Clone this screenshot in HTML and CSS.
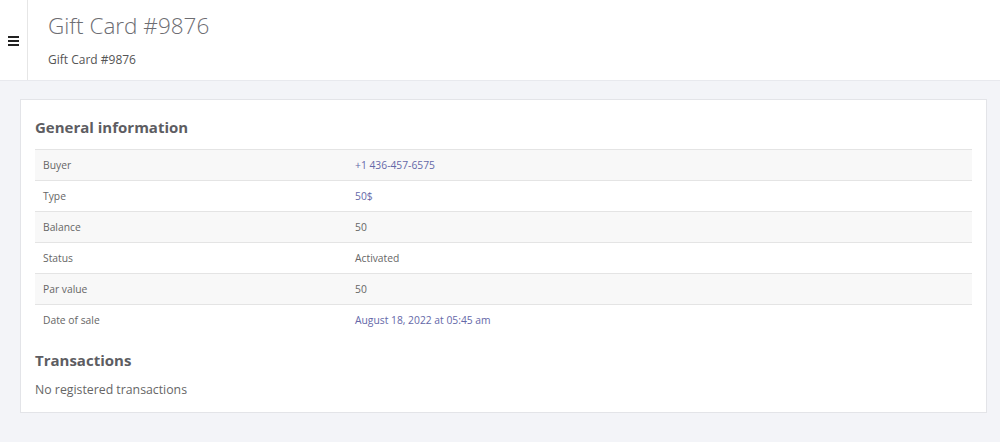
FILE: index.html
```html
<!DOCTYPE html>
<html lang="en">
<head>
  <meta charset="UTF-8">
  <title>Gift Card #9876</title>
  <link rel="stylesheet" href="styles.css">
</head>
<body>
  <header class="topbar">
    <div class="toggle">
      <svg width="11" height="10" viewBox="0 0 11 10"><rect x="0" y="0" width="11" height="2" fill="#222"/><rect x="0" y="4" width="11" height="2" fill="#222"/><rect x="0" y="8" width="11" height="2" fill="#222"/></svg>
    </div>
    <div class="page-title">
      <h1>Gift Card #9876</h1>
      <div class="crumb">Gift Card #9876</div>
    </div>
  </header>

  <main class="content">
    <div class="card">
      <h2>General information</h2>
      <table class="info">
        <tr><td>Buyer</td><td><a href="#">+1 436-457-6575</a></td></tr>
        <tr><td>Type</td><td><a href="#">50$</a></td></tr>
        <tr><td>Balance</td><td>50</td></tr>
        <tr><td>Status</td><td>Activated</td></tr>
        <tr><td>Par value</td><td>50</td></tr>
        <tr><td>Date of sale</td><td><a href="#">August 18, 2022 at 05:45 am</a></td></tr>
      </table>
      <h2>Transactions</h2>
      <p class="empty">No registered transactions</p>
    </div>
  </main>
</body>
</html>
```

FILE: styles.css
```css
body {
  margin: 0;
  background-color: #f3f4f8;
  font-family: "Open Sans", sans-serif;
  color: #555;
}

.topbar {
  display: flex;
  height: 80px;
  background-color: #fff;
  border-bottom: 1px solid #e8e9ee;
}

.toggle {
  width: 28px;
  border-right: 1px solid #e6e6e6;
  display: flex;
  align-items: center;
  justify-content: center;
  padding-top: 2px;
  box-sizing: border-box;
}

.page-title {
  padding: 10px 0 0 20px;
}

.page-title h1 {
  margin: 0;
  font-size: 22.5px;
  font-weight: 300;
  color: #6d6d72;
  line-height: 32px;
}

.crumb {
  margin-top: 9px;
  font-size: 12px;
  color: #555;
}

.content {
  padding: 18px 13px 0 20px;
}

.card {
  background-color: #fff;
  border: 1px solid #e3e4e8;
  padding: 14px 14px 14px 14px;
}

.card h2 {
  margin: 2px 0 11px 0;
  font-size: 15px;
  font-weight: 700;
  color: #5d5d62;
  line-height: 22px;
}

.info {
  width: 100%;
  border-collapse: collapse;
  font-size: 10.3px;
  margin-bottom: 14px;
}

.info td {
  border-top: 1px solid #e4e4e4;
  padding: 0 8px;
  height: 30px;
  color: #666;
}

.info td:first-child {
  width: 33.3%;
}

.info tr:nth-child(odd) td {
  background-color: #f8f8f8;
}

.info a {
  color: #6468a8;
  text-decoration: none;
}

.empty {
  margin: -1px 0 0 0;
  font-size: 12.3px;
  color: #666;
}
```
